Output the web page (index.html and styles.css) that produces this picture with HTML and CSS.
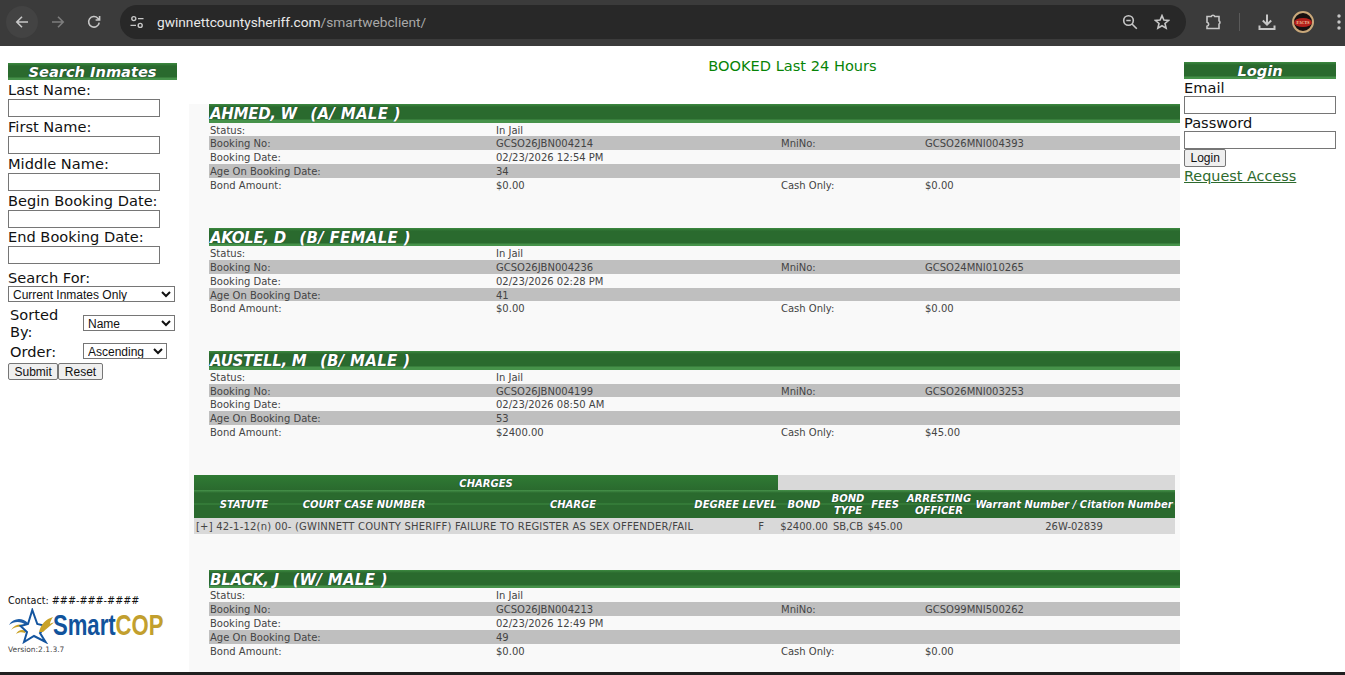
FILE: index.html
```html
<!DOCTYPE html>
<html lang="en">
<head>
<meta charset="utf-8">
<title>Booked Last 24 Hours</title>
<link rel="stylesheet" href="styles.css">
</head>
<body>
<header class="toolbar">
  <div class="nav">
    <span class="nav-btn nav-back"><svg viewBox="0 0 16 16" width="16" height="16"><path d="M14 8H3M8 2.8 2.8 8 8 13.2" class="ico"/></svg></span>
    <span class="nav-btn"><svg viewBox="0 0 16 16" width="16" height="16"><path d="M2 8h11M8 2.8 13.2 8 8 13.2" class="ico dim"/></svg></span>
    <span class="nav-btn"><svg viewBox="0 0 16 16" width="16" height="16"><path d="M13.2 8.6A5.3 5.3 0 1 1 11.8 4.2L13.6 6M13.6 2v4h-4" class="ico"/></svg></span>
  </div>
  <div class="omnibox">
    <span class="site-info"><svg viewBox="0 0 16 16" width="16" height="16"><circle cx="4.8" cy="4.6" r="2" class="ico thin"/><path d="M9 4.6h5.5M1.5 11.4H7" class="ico thin"/><circle cx="11.2" cy="11.4" r="2" class="ico thin"/></svg></span>
    <span class="url"><span class="host">gwinnettcountysheriff.com</span><span class="path">/smartwebclient/</span></span>
    <span class="omni-icons">
      <svg viewBox="0 0 16 16" width="16" height="16"><circle cx="6.5" cy="6.5" r="4.8" class="ico"/><path d="M4.300 6.500h4.400M10 10l4.800 4.800" class="ico"/></svg>
      <svg viewBox="0 0 16 16" width="16" height="16"><path d="M8 1.600 9.900 6l4.700.4-3.600 3.100 1.100 4.600L8 11.700 3.900 14.100 5 9.500 1.400 6.400 6.100 6Z" class="ico"/></svg>
    </span>
  </div>
  <div class="actions">
    <svg viewBox="0 0 18 18" width="18" height="18"><path d="M3 3.500h4.200a1.900 1.900 0 0 1 3.600 0H15v4.300a2 2 0 0 1 0 3.400v4.300H3v-2.300a2.100 2.100 0 0 0 1.700-2 2.100 2.100 0 0 0-1.700-2Z" class="ico"/></svg>
    <span class="divider"></span>
    <svg viewBox="0 0 18 18" width="18" height="18"><path d="M9 1.500v10M4.800 7.500 9 11.700l4.200-4.200M1.500 12.500v3.600h15v-3.600" class="ico wide"/></svg>
    <span class="avatar"><span class="avatar-core">FACTS</span></span>
    <svg viewBox="0 0 6 18" width="6" height="18"><circle cx="3" cy="3" r="1.700" class="dot"/><circle cx="3" cy="9" r="1.700" class="dot"/><circle cx="3" cy="15" r="1.700" class="dot"/></svg>
  </div>
</header>

<div class="page">
  <aside class="left">
    <h2 class="bar-title">Search Inmates</h2>
    <form class="search">
      <label class="fld">Last Name:<input type="text" class="txt"></label>
      <label class="fld">First Name:<input type="text" class="txt"></label>
      <label class="fld">Middle Name:<input type="text" class="txt"></label>
      <label class="fld">Begin Booking Date:<input type="text" class="txt"></label>
      <label class="fld">End Booking Date:<input type="text" class="txt"></label>
      <label class="fld fld-search">Search For:
        <select class="sel sel-full"><option>Current Inmates Only</option></select>
      </label>
      <div class="sort-grid">
        <span class="sort-label">Sorted By:</span>
        <select class="sel sel-name"><option>Name</option></select>
        <span class="sort-label">Order:</span>
        <select class="sel sel-order"><option>Ascending</option></select>
      </div>
      <div class="btns"><button type="button" class="btn">Submit</button><button type="button" class="btn">Reset</button></div>
    </form>
    <footer class="foot">
      <div class="contact">Contact: ###-###-####</div>
      <div class="logo">
        <svg class="logo-mark" viewBox="0 0 46 36" width="46" height="36">
          <path d="M1 17C5 10 14 9 20 15l-2 2C13 13 6 13 1 17Z" class="logo-blue"/>
          <path d="M3 22C7 16 14 15 19 19l-1 2C13 18 8 18 3 22Z" class="logo-gold"/>
          <path d="M8 26C10 22 14 21 18 23l-1 2C14 24 11 24 8 26Z" class="logo-gold"/>
          <path d="M24.300 2 20 16l-7.400 2 6.400 6-3 10 10-6 11.600 6-5.600-9 6-7-8.700-2Z" class="logo-star"/>
          <path d="M31 24C33 16 38 11 45 9C43 12 42 14 42 16C43 15 44 15 46 14.500C42 18 38 21 35 24Z" class="logo-gold"/>
        </svg>
        <span class="logo-word">Smart<span class="logo-cop">COP</span></span>
      </div>
      <div class="version">Version:2.1.3.7</div>
    </footer>
  </aside>

  <main class="center">
    <h1 class="heading">BOOKED Last 24 Hours</h1>
    <div class="list">
      <section class="card">
        <h3 class="inmate"><span class="who">AHMED, W</span><span class="race">(A/ MALE )</span></h3>
        <div class="row"><span>Status:</span><span>In Jail</span></div>
        <div class="row alt"><span>Booking No:</span><span>GCSO26JBN004214</span><span>MniNo:</span><span>GCSO26MNI004393</span></div>
        <div class="row"><span>Booking Date:</span><span>02/23/2026 12:54 PM</span></div>
        <div class="row alt"><span>Age On Booking Date:</span><span>34</span></div>
        <div class="row"><span>Bond Amount:</span><span>$0.00</span><span>Cash Only:</span><span>$0.00</span></div>
      </section>
      <section class="card">
        <h3 class="inmate"><span class="who">AKOLE, D</span><span class="race">(B/ FEMALE )</span></h3>
        <div class="row"><span>Status:</span><span>In Jail</span></div>
        <div class="row alt"><span>Booking No:</span><span>GCSO26JBN004236</span><span>MniNo:</span><span>GCSO24MNI010265</span></div>
        <div class="row"><span>Booking Date:</span><span>02/23/2026 02:28 PM</span></div>
        <div class="row alt"><span>Age On Booking Date:</span><span>41</span></div>
        <div class="row"><span>Bond Amount:</span><span>$0.00</span><span>Cash Only:</span><span>$0.00</span></div>
      </section>
      <section class="card">
        <h3 class="inmate"><span class="who">AUSTELL, M</span><span class="race">(B/ MALE )</span></h3>
        <div class="row"><span>Status:</span><span>In Jail</span></div>
        <div class="row alt"><span>Booking No:</span><span>GCSO26JBN004199</span><span>MniNo:</span><span>GCSO26MNI003253</span></div>
        <div class="row"><span>Booking Date:</span><span>02/23/2026 08:50 AM</span></div>
        <div class="row alt"><span>Age On Booking Date:</span><span>53</span></div>
        <div class="row"><span>Bond Amount:</span><span>$2400.00</span><span>Cash Only:</span><span>$45.00</span></div>
      </section>
      <section class="charges">
        <div class="charges-top"><div class="charges-title">CHARGES</div></div>
        <div class="charges-head">
          <span>STATUTE</span><span class="court">COURT CASE NUMBER</span><span>CHARGE</span><span>DEGREE LEVEL</span><span>BOND</span><span>BOND TYPE</span><span>FEES</span><span>ARRESTING OFFICER</span><span>Warrant Number / Citation Number</span>
        </div>
        <div class="charges-row">
          <span class="charge-text">[+] 42-1-12(n) 00- (GWINNETT COUNTY SHERIFF) FAILURE TO REGISTER AS SEX OFFENDER/FAIL</span><span class="degree">F</span><span>$2400.00</span><span>SB,CB</span><span>$45.00</span><span></span><span>26W-02839</span>
        </div>
      </section>
      <section class="card">
        <h3 class="inmate"><span class="who">BLACK, J</span><span class="race">(W/ MALE )</span></h3>
        <div class="row"><span>Status:</span><span>In Jail</span></div>
        <div class="row alt"><span>Booking No:</span><span>GCSO26JBN004213</span><span>MniNo:</span><span>GCSO99MNI500262</span></div>
        <div class="row"><span>Booking Date:</span><span>02/23/2026 12:49 PM</span></div>
        <div class="row alt"><span>Age On Booking Date:</span><span>49</span></div>
        <div class="row"><span>Bond Amount:</span><span>$0.00</span><span>Cash Only:</span><span>$0.00</span></div>
      </section>
    </div>
  </main>

  <aside class="right">
    <h2 class="bar-title">Login</h2>
    <form class="login">
      <label class="fld-r">Email<input type="text" class="txt"></label>
      <label class="fld-r">Password<input type="password" class="txt"></label>
      <button type="button" class="btn">Login</button>
      <a href="#" class="request">Request Access</a>
    </form>
  </aside>
</div>
<div class="strip"></div>
</body>
</html>
```

FILE: styles.css
```css
* { box-sizing: border-box; }
html, body { margin: 0; height: 100%; overflow: hidden; background: #fff; }
body { font-family: "DejaVu Sans", Verdana, sans-serif; color: #111; }

/* browser chrome */
.toolbar { height: 46px; background: #3b3b3b; display: flex; align-items: center; padding-bottom: 2px; }
.nav { display: flex; align-items: center; width: 120px; padding-left: 6px; }
.nav-btn { width: 36px; height: 32px; display: flex; align-items: center; justify-content: center; }
.nav-back { background: #434343; border-radius: 50%; width: 32px; margin-right: 2px; }
.ico { fill: none; stroke: #c7c7c7; stroke-width: 1.6; }
.ico.dim { stroke: #7d7d7d; }
.ico.thin { stroke-width: 1.4; }
.ico.wide { stroke-width: 2; }
.dot { fill: #c7c7c7; }
.omnibox { width: 1066px; height: 34px; background: #282828; border-radius: 17px; display: flex; align-items: center; padding-left: 9px; }
.site-info { width: 28px; display: flex; }
.url { font: 13.7px Roboto, "Noto Sans", sans-serif; }
.host { color: #e8e8e8; }
.path { color: #a8a8a8; }
.omni-icons { margin-left: auto; display: flex; gap: 16px; padding-right: 16px; }
.actions { flex: 1; display: flex; align-items: center; padding-left: 18px; }
.divider { width: 1px; height: 18px; background: #5a5a5a; margin: 0 18px 0 17px; }
.avatar { width: 22px; height: 22px; border-radius: 50%; background: #171010; border: 2px solid #c9a87a; margin: 0 22px 0 16px; display: flex; align-items: center; justify-content: center; flex: none; }
.avatar-core { width: 18px; height: 9px; border-radius: 50%; background: #b3201c; color: #f5d8a8; font: bold 4px/9px "Liberation Serif", serif; text-align: center; overflow: hidden; }

/* page columns */
.page { height: 626px; display: flex; overflow: hidden; }
.left { width: 189px; flex: none; padding: 17px 12px 0 8px; display: flex; flex-direction: column; }
.center { width: 991px; flex: none; }
.right { flex: 1; padding: 16px 9px 0 4px; }

.bar-title { margin: 0; height: 17px; font: italic bold 14.6px/18px "DejaVu Sans", sans-serif; color: #fff; text-align: center;
  text-shadow: 0 0 1px #123; background: linear-gradient(#3d8a41 0, #2a6a2e 3px, #2a6a2e 14px, #46924a 15px, #46924a 17px); }

/* search form */
.search { display: flex; flex-direction: column; padding-top: .3px; }
.fld { display: block; font-size: 14.6px; line-height: 19px; height: 36.75px; white-space: nowrap; }
.fld .txt { display: block; }
.txt { width: 152px; height: 18px; border: 1px solid #767676; background: #fff; padding: 0; margin: 0; border-radius: 0; }
.fld-search { height: auto; margin-top: 4px; line-height: 20px; }
.sel { font: 12px "Liberation Sans", Arial, sans-serif; height: 16px; border: 1px solid #767676; background: #fff; padding: 0; color: #111; border-radius: 0; display: block; }
.sel-full { width: 167px; margin-top: -2px; }
.sel-name { width: 92px; }
.sel-order { width: 84px; margin-top: -2px; }
.sort-grid { display: grid; grid-template-columns: 75px auto; justify-content: start; align-items: center; row-gap: 3px; padding-top: 2px; margin-top: 2px; }
.sort-label { font-size: 14.6px; line-height: 17px; padding-left: 2px; width: 62px; }
.btns { display: flex; margin-top: 3px; }
.btn { font: 12px "Liberation Sans", Arial, sans-serif; height: 17px; padding: 0 5.5px; background: #efefef; color: #111; border: 1px solid #767676; border-radius: 2px; line-height: 14px; }
.foot { margin-top: auto; padding-bottom: 17px; }
.contact { font-size: 9.65px; line-height: 12px; }
.logo { display: flex; align-items: flex-start; height: 36px; margin-top: 1px; }
.logo-mark { flex: none; }
.logo-blue { fill: #1f5fa8; }
.logo-gold { fill: #c9a227; }
.logo-star { fill: #fff; stroke: #14559f; stroke-width: 2; stroke-linejoin: miter; }
.logo-word { flex: none; width: 109px; white-space: nowrap; font: bold 30px/34px "Liberation Sans", sans-serif; color: #11539c; margin-left: -1px; transform: scaleX(.736); transform-origin: 0 50%; }
.logo-cop { color: #c29f2e; }
.version { font-size: 7.5px; line-height: 10px; color: #444; margin-top: 1px; }

/* center */
.heading { margin: 0; height: 58px; padding: 11px 0 0 216px; font-weight: normal; font-size: 14.6px; line-height: 18px; text-align: center; color: #078407; }
.list { background: #f9f9f9; padding: 0 0 0 20px; height: 568px; }
.card { margin-bottom: 36px; }
.inmate { margin: 0; height: 18.6px; font: italic bold 15px/21.5px "DejaVu Sans", sans-serif; color: #fff; padding-left: 1px; white-space: nowrap;
  text-shadow: 0 0 1px #123; background: linear-gradient(#3d8a41 0, #2a6a2e 3px, #2a6a2e 15px, #46924a 16px, #46924a 18.6px); }
.who { letter-spacing: -.3px; margin-right: 13.5px; }
.race { letter-spacing: .3px; }
.row { height: 13.8px; display: grid; grid-template-columns: 286px 285px 144px 1fr; padding-left: 1px; font-size: 10px; line-height: 15px; color: #444; }
.row.alt { background: #bfbfbf; }
.charges { margin: 0 5px 36px -15px; height: 59px; }
.charges-top { height: 15px; background: #d9d9d9; }
.charges-title { width: 584px; height: 15px; text-align: center; font: italic bold 10px/17px "DejaVu Sans", sans-serif; color: #fff; text-shadow: 0 0 1px #123; background: linear-gradient(#2f7a34, #2a6a2e); }
.charges-head, .charges-row { display: grid; grid-template-columns: 100px 158px 242px 83px 54px 34px 40px 68px 1fr; text-align: center; }
.charges-head { height: 28px; align-items: center; padding-top: 2px; font: italic bold 10px/12px "DejaVu Sans", sans-serif; color: #fff; text-shadow: 0 0 1px #123;
  background: linear-gradient(#46924a 0, #2a6a2e 3px, #2a6a2e 13px, #3d8a41 14px, #2a6a2e 15px, #2a6a2e 28px); }
.charges-head span { display: flex; justify-content: center; white-space: nowrap; }
.charges-head span:nth-child(6), .charges-head span:nth-child(8) { white-space: normal; text-align: center; }
.charges-head .court { padding-right: 18px; }
.charges-row { height: 16px; background: #d9d9d9; font-size: 10px; line-height: 17.5px; color: #444; white-space: nowrap; }
.charge-text { grid-column: span 3; text-align: left; padding-left: 2px; letter-spacing: .2px; }
.degree { text-align: right; padding-right: 13px; }

/* login */
.fld-r { display: block; font-size: 14.6px; line-height: 17px; }
.fld-r .txt { display: block; }
.login { display: flex; flex-direction: column; align-items: flex-start; }
.login .btn { height: 18px; }
.request { font-size: 14.4px; line-height: 18px; color: #2d6a2d; }

.strip { height: 3px; background: #202020; }
```
